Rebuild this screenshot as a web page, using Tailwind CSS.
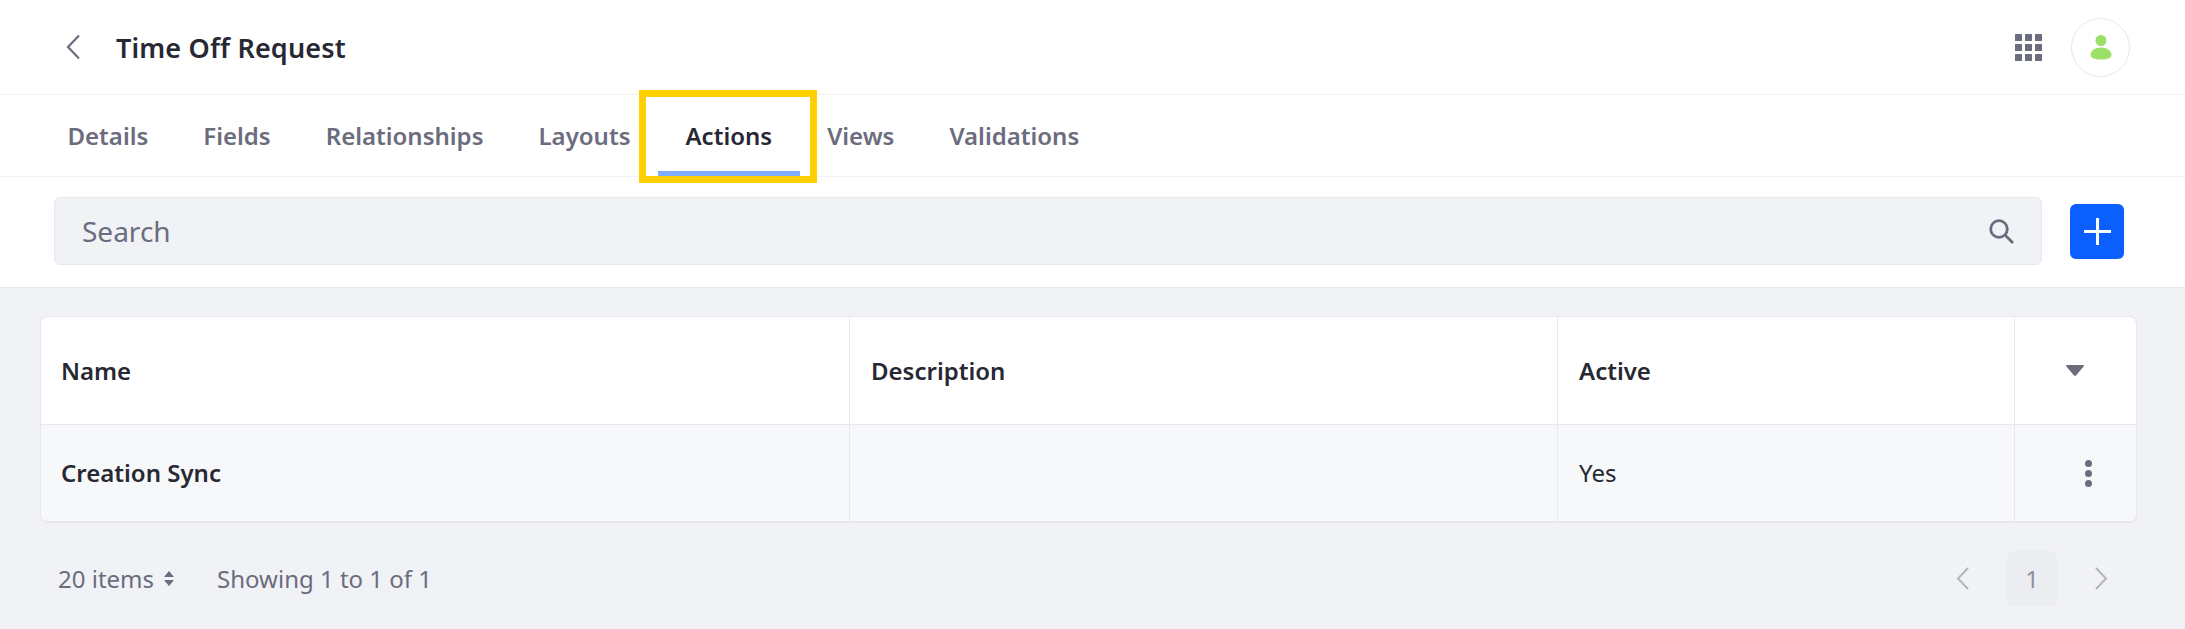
<!DOCTYPE html>
<html lang="en">
<head>
    <meta charset="UTF-8">
    <meta name="viewport" content="width=device-width, initial-scale=1.0">
    <title>Time Off Request</title>
    <script src="https://cdn.jsdelivr.net/npm/@tailwindcss/browser@4"></script>
</head>
<body class="bg-[#f1f2f5] text-[#272833] font-['Noto_Sans',sans-serif] h-[629px] overflow-hidden relative">
    <!-- top bar -->
    <header class="flex items-center justify-between h-[95px] bg-white border-b border-[#f1f2f5] pl-[65px] pr-[55px]">
        <div class="flex items-center gap-[32px]">
            <svg class="w-[19px] h-[26px]" viewBox="0 0 19 26" fill="none" stroke="#6b6c7e" stroke-width="2.2"><path d="M14 1.500 3 13l11 11.500"/></svg>
            <h1 class="text-[27px] font-semibold leading-none tracking-[0.15px]">Time Off Request</h1>
        </div>
        <div class="flex items-center gap-[29px]">
            <svg class="w-[27px] h-[27px]" viewBox="0 0 27 27" fill="#6b6c7e">
                <rect x="0" y="0" width="7" height="7" rx="0.5"/><rect x="10" y="0" width="7" height="7" rx="0.5"/><rect x="20" y="0" width="7" height="7" rx="0.5"/>
                <rect x="0" y="10" width="7" height="7" rx="0.5"/><rect x="10" y="10" width="7" height="7" rx="0.5"/><rect x="20" y="10" width="7" height="7" rx="0.5"/>
                <rect x="0" y="20" width="7" height="7" rx="0.5"/><rect x="10" y="20" width="7" height="7" rx="0.5"/><rect x="20" y="20" width="7" height="7" rx="0.5"/>
            </svg>
            <div class="w-[59px] h-[59px] rounded-full border-[1.5px] border-[#e7e7ed] flex items-center justify-center">
                <svg class="w-[22px] h-[25px]" viewBox="0 0 22 25" fill="#9be169"><circle cx="11" cy="5.500" r="5.500"/><path d="M11 12.500c6 0 10.500 3.500 10.500 7.500 0 3-4 4.500-10.500 4.500S.5 23 .5 20c0-4 4.500-7.500 10.500-7.500z"/></svg>
            </div>
        </div>
    </header>

    <!-- tabs -->
    <nav class="flex h-[82px] bg-white border-b border-[#f1f2f5] pl-[40px] text-[24px] font-semibold text-[#6b6c7e]">
        <a class="flex items-center px-[27.5px]">Details</a>
        <a class="flex items-center px-[27.5px]">Fields</a>
        <a class="flex items-center px-[27.5px]">Relationships</a>
        <a class="flex items-center px-[27.5px]">Layouts</a>
        <a class="relative flex items-center px-[27.5px] text-[#272833]">Actions<span class="absolute left-0 right-0 bottom-0 h-[5px] bg-[#80acff]"></span></a>
        <a class="flex items-center px-[27.5px]">Views</a>
        <a class="flex items-center px-[27.5px]">Validations</a>
    </nav>

    <!-- search -->
    <div class="flex items-start h-[111px] bg-white border-b border-[#e7e7ed] pl-[54px] pr-[61px] pt-[20px]">
        <div class="flex-1 flex items-center justify-between h-[68px] bg-[#f1f2f5] border border-[#e7e7ed] rounded-[6px] pl-[27px] pr-[27px]">
            <span class="text-[28px] text-[#6b6c7e]">Search</span>
            <svg class="w-[25px] h-[25px]" viewBox="0 0 25 25" fill="none" stroke="#6b6c7e" stroke-width="2.8"><circle cx="10" cy="10" r="8.300"/><path d="m16 16 8 8"/></svg>
        </div>
        <button class="ml-[28px] mt-[7px] w-[54px] h-[55px] rounded-[6px] bg-[#0b5fff] flex items-center justify-center">
            <svg class="w-[27px] h-[27px]" viewBox="0 0 27 27" fill="none" stroke="#fff" stroke-width="3"><path d="M13.500 0v27M0 13.500h27"/></svg>
        </button>
    </div>

    <main class="pl-[40px] pr-[48px] pt-[28px]">
        <!-- table -->
        <div class="grid grid-cols-[809px_708px_457px_1fr] border border-[#e7e7ed] border-b-2 rounded-[8px] overflow-hidden text-[24px] h-[207px] grid-rows-[108px_1fr]">
            <div class="bg-white flex items-center pl-[20px] font-semibold border-b border-r border-[#e7e7ed]">Name</div>
            <div class="bg-white flex items-center pl-[21px] font-semibold border-b border-r border-[#e7e7ed]">Description</div>
            <div class="bg-white flex items-center pl-[21px] font-semibold border-b border-r border-[#e7e7ed]">Active</div>
            <div class="bg-white flex items-center pl-[51px] border-b border-[#e7e7ed]">
                <svg class="w-[18px] h-[11px]" viewBox="0 0 18 11" fill="#6b6c7e"><path d="M.8 0h16.400c.7 0 1 .7.6 1.200L10 10.400c-.5.6-1.500.6-2 0L.2 1.200C-.2.7.1 0 .8 0z"/></svg>
            </div>
            <div class="bg-[#f7f8f9] flex items-center pl-[20px] font-semibold border-r border-[#e7e7ed]">Creation Sync</div>
            <div class="bg-[#f7f8f9] border-r border-[#e7e7ed]"></div>
            <div class="bg-[#f7f8f9] flex items-center pl-[21px] border-r border-[#e7e7ed]">Yes</div>
            <div class="bg-[#f7f8f9] flex items-center pl-[70px]">
                <svg class="w-[7px] h-[27px]" viewBox="0 0 7 27" fill="#6b6c7e"><circle cx="3.500" cy="3.500" r="3.500"/><circle cx="3.500" cy="13.500" r="3.500"/><circle cx="3.500" cy="23.500" r="3.500"/></svg>
            </div>
        </div>

        <!-- pagination -->
        <div class="flex items-center justify-between mt-[28px] h-[55px] text-[24px] text-[#6b6c7e]">
            <div class="flex items-center pl-[18px]">
                <span>20 items</span>
                <svg class="ml-[10px] w-[10px] h-[15px]" viewBox="0 0 10 15" fill="#6b6c7e"><path d="M5 0l5 6H0zM5 15 0 9h10z"/></svg>
                <span class="ml-[43px]">Showing 1 to 1 of 1</span>
            </div>
            <div class="flex items-center pr-[29px]">
                <svg class="w-[13px] h-[23px]" viewBox="0 0 13 23" fill="none" stroke="#b3b4bd" stroke-width="2"><path d="M12 1 2 11.500 12 22"/></svg>
                <span class="ml-[38px] w-[50px] h-[55px] rounded-[6px] bg-[#ecedf1] flex items-center justify-center text-[#8f909d]">1</span>
                <svg class="ml-[38px] w-[13px] h-[23px]" viewBox="0 0 13 23" fill="none" stroke="#b3b4bd" stroke-width="2"><path d="M1 1l10 10.500L1 22"/></svg>
            </div>
        </div>
    </main>

    <!-- highlight annotation over the active tab -->
    <div class="absolute left-[639px] top-[90px] w-[178px] h-[93px] border-[7px] border-[#ffcf00]"></div>
</body>
</html>
